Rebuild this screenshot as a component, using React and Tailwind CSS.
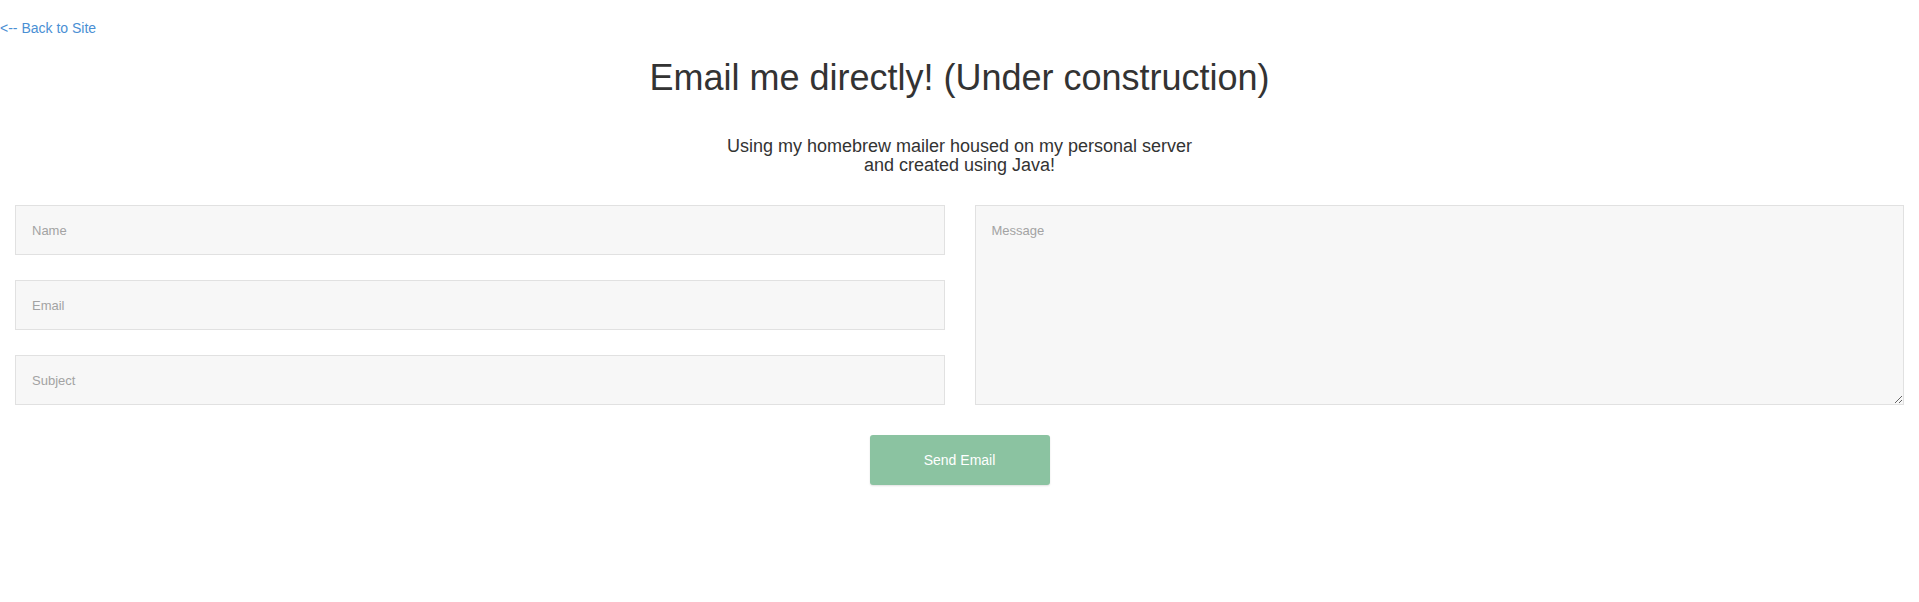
export default function App() {
  return (
    <div className="min-h-[602px] bg-white text-[#333] [font-family:'Liberation_Sans',Arial,sans-serif]">
      <div className="pt-[18px] text-[14px] leading-[20px]">
        <a href="#" className="text-[#4a8fd4]">&lt;-- Back to Site</a>
      </div>
      <h1 className="mt-5 mb-[10px] text-center text-[36px] font-normal leading-[1.1]">
        Email me directly! (Under construction)
      </h1>
      <div className="h-5" />
      <h4 className="mt-[9px] mb-[10px] text-center text-[18px] font-normal leading-[1.1]">
        Using my homebrew mailer housed on my personal server
        <br />
        and created using Java!
      </h4>

      <form className="mt-[29px] px-[15px]" onSubmit={(e) => e.preventDefault()}>
        <div className="grid grid-cols-2 gap-[30px]">
          <div className="flex flex-col gap-[25px]">
            {['Name', 'Email', 'Subject'].map((label) => (
              <input
                key={label}
                placeholder={label}
                className="h-[50px] w-full border border-[#e1e1e1] bg-[#f7f7f7] px-[16px] text-[13px] text-[#555] outline-none placeholder:text-[#a3a3a3]"
              />
            ))}
          </div>
          <textarea
            placeholder="Message"
            className="h-[200px] w-full border border-[#e1e1e1] bg-[#f7f7f7] px-[16px] pt-[16px] text-[13px] leading-[18px] text-[#555] outline-none placeholder:text-[#a3a3a3]"
          />
        </div>
        <div className="mt-[30px] flex justify-center">
          <button
            type="submit"
            className="h-[50px] w-[180px] rounded-[3px] bg-[#8bc3a1] text-[14px] text-white shadow-[0_1px_2px_rgba(0,0,0,0.12)]"
          >
            Send Email
          </button>
        </div>
      </form>
    </div>
  );
}
